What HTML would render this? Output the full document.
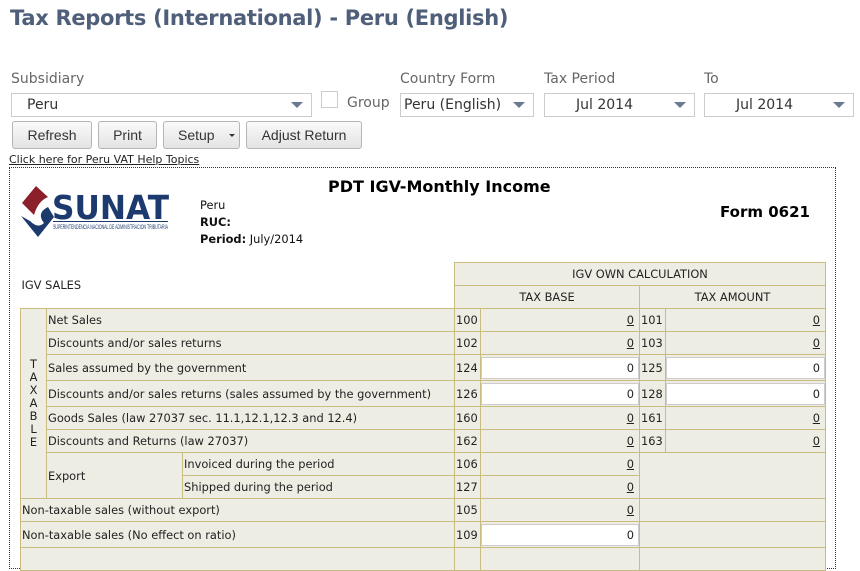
<!DOCTYPE html>
<html><head><style>
body{margin:0;width:860px;height:551px;overflow:hidden;background:#fff;font-family:"Liberation Sans",sans-serif;position:relative}
.a{position:absolute}
h1{position:absolute;left:10px;top:6px;margin:0;font:bold 21px "DejaVu Sans","Liberation Sans",sans-serif;color:#4f5f7a;letter-spacing:-0.3px}
.lbl{position:absolute;top:71px;font:14px "DejaVu Sans",sans-serif;color:#666}
.sel{position:absolute;top:93px;height:22px;border:1px solid #ccc;background:#fff;font:14px "DejaVu Sans",sans-serif;color:#333;line-height:22px;box-sizing:content-box}
.sel:after{content:"";position:absolute;right:8px;top:8px;border-left:6px solid transparent;border-right:6px solid transparent;border-top:6px solid #6a7a94}
.btn{position:absolute;top:121px;border:1px solid #b5b5b5;border-radius:3px;background:linear-gradient(#fafafa,#e3e3e3);font:14px "Liberation Sans",sans-serif;color:#333;line-height:26px;text-align:center;box-sizing:border-box;height:28px}
table{position:absolute;left:20px;top:262px;border-collapse:collapse;table-layout:fixed;font:11.4px "DejaVu Sans",sans-serif;color:#222}
td{border:1px solid #c9bc80;background:#eeede3;padding:0 1px;height:22px;white-space:nowrap;overflow:hidden}
td.n{border:none;background:#fff}
td.c{text-align:center}
td.r{text-align:right;padding-right:5px}
td.r u{text-decoration:underline}
tr.i td{height:25px}
.inp{background:#fff;border:1px solid #ccc;height:20px;line-height:20px;text-align:right;padding-right:4px;margin:0 -1px}
</style></head><body>
<h1>Tax Reports (International) - Peru (English)</h1>
<div class="lbl" style="left:11px">Subsidiary</div>
<div class="lbl" style="left:400px">Country Form</div>
<div class="lbl" style="left:544px">Tax Period</div>
<div class="lbl" style="left:704px">To</div>
<div class="sel" style="left:11px;padding-left:15px;width:284px">Peru</div>
<div class="a" style="left:321px;top:91px;width:15px;height:15px;border:1px solid #ccc"></div>
<div class="a" style="left:347px;top:95px;font:14px 'DejaVu Sans',sans-serif;color:#666">Group</div>
<div class="sel" style="left:400px;width:129px;padding-left:3px">Peru (English)</div>
<div class="sel" style="left:544px;width:118px;padding-left:31px">Jul 2014</div>
<div class="sel" style="left:704px;width:117px;padding-left:31px">Jul 2014</div>
<div class="btn" style="left:12px;width:80px">Refresh</div>
<div class="btn" style="left:98px;width:59px">Print</div>
<div class="btn" style="left:163px;width:77px;text-align:left;padding-left:14px">Setup<span style="position:absolute;right:4px;top:12px;border-left:3px solid transparent;border-right:3px solid transparent;border-top:3px solid #333"></span></div>
<div class="btn" style="left:246px;width:116px">Adjust Return</div>
<div class="a" style="left:9px;top:153px;font:11px 'DejaVu Sans',sans-serif;color:#222;text-decoration:underline">Click here for Peru VAT Help Topics</div>
<div class="a" style="left:9px;top:167px;width:825px;height:400px;border:1px dotted #333"></div>
<svg class="a" style="left:18px;top:183px" width="155" height="56" viewBox="0 0 155 56">
<path d="M18 3 L4 20 L16 32 Q20 18 30 14 Z" fill="#8b1f2a"/>
<path d="M3 33 L20 54 L36 34 L30 24 Q18 30 26 40 Q20 46 12 38 Z" fill="#1c3a6e"/>
<text x="34" y="36" font-family="DejaVu Sans,sans-serif" font-weight="bold" font-size="33" fill="#1c3a6e" textLength="117" lengthAdjust="spacingAndGlyphs">SUNAT</text>
<rect x="35" y="38" width="115" height="1" fill="#1c3a6e"/>
<text x="35" y="46" font-family="Liberation Sans,sans-serif" font-size="6" fill="#1c3a6e" textLength="115" lengthAdjust="spacingAndGlyphs">SUPERINTENDENCIA NACIONAL DE ADMINISTRACION TRIBUTARIA</text>
</svg>
<div class="a" style="left:200px;top:197px;font:11.4px/17px 'DejaVu Sans',sans-serif;color:#111">Peru<br><b>RUC:</b><br><b>Period:</b> July/2014</div>
<div class="a" style="left:328px;top:177px;font:bold 16px 'DejaVu Sans',sans-serif;color:#000">PDT IGV-Monthly Income</div>
<div class="a" style="left:720px;top:203px;font:bold 15px 'DejaVu Sans',sans-serif;color:#000">Form 0621</div>
<table>
<colgroup><col style="width:26px"><col style="width:136px"><col style="width:272px"><col style="width:26px"><col style="width:159px"><col style="width:26px"><col style="width:160px"></colgroup>
<tr><td class="n" colspan="3" rowspan="2">IGV SALES</td><td class="c" colspan="4">IGV OWN CALCULATION</td></tr>
<tr><td class="c" colspan="2">TAX BASE</td><td class="c" colspan="2">TAX AMOUNT</td></tr>
<tr><td rowspan="8" class="c" style="line-height:13px;white-space:normal">T<br>A<br>X<br>A<br>B<br>L<br>E</td><td colspan="2">Net Sales</td><td>100</td><td class="r"><u>0</u></td><td>101</td><td class="r"><u>0</u></td></tr>
<tr><td colspan="2">Discounts and/or sales returns</td><td>102</td><td class="r"><u>0</u></td><td>103</td><td class="r"><u>0</u></td></tr>
<tr class="i"><td colspan="2">Sales assumed by the government</td><td>124</td><td><div class="inp">0</div></td><td>125</td><td><div class="inp">0</div></td></tr>
<tr class="i"><td colspan="2">Discounts and/or sales returns (sales assumed by the government)</td><td>126</td><td><div class="inp">0</div></td><td>128</td><td><div class="inp">0</div></td></tr>
<tr><td colspan="2">Goods Sales (law 27037 sec. 11.1,12.1,12.3 and 12.4)</td><td>160</td><td class="r"><u>0</u></td><td>161</td><td class="r"><u>0</u></td></tr>
<tr><td colspan="2">Discounts and Returns (law 27037)</td><td>162</td><td class="r"><u>0</u></td><td>163</td><td class="r"><u>0</u></td></tr>
<tr><td rowspan="2">Export</td><td>Invoiced during the period</td><td>106</td><td class="r"><u>0</u></td><td colspan="2" rowspan="2"></td></tr>
<tr><td>Shipped during the period</td><td>127</td><td class="r"><u>0</u></td></tr>
<tr><td colspan="3">Non-taxable sales (without export)</td><td>105</td><td class="r"><u>0</u></td><td colspan="2"></td></tr>
<tr class="i"><td colspan="3">Non-taxable sales (No effect on ratio)</td><td>109</td><td><div class="inp">0</div></td><td colspan="2"></td></tr>
<tr><td colspan="3"></td><td></td><td></td><td colspan="2"></td></tr>
</table>
</body></html>
